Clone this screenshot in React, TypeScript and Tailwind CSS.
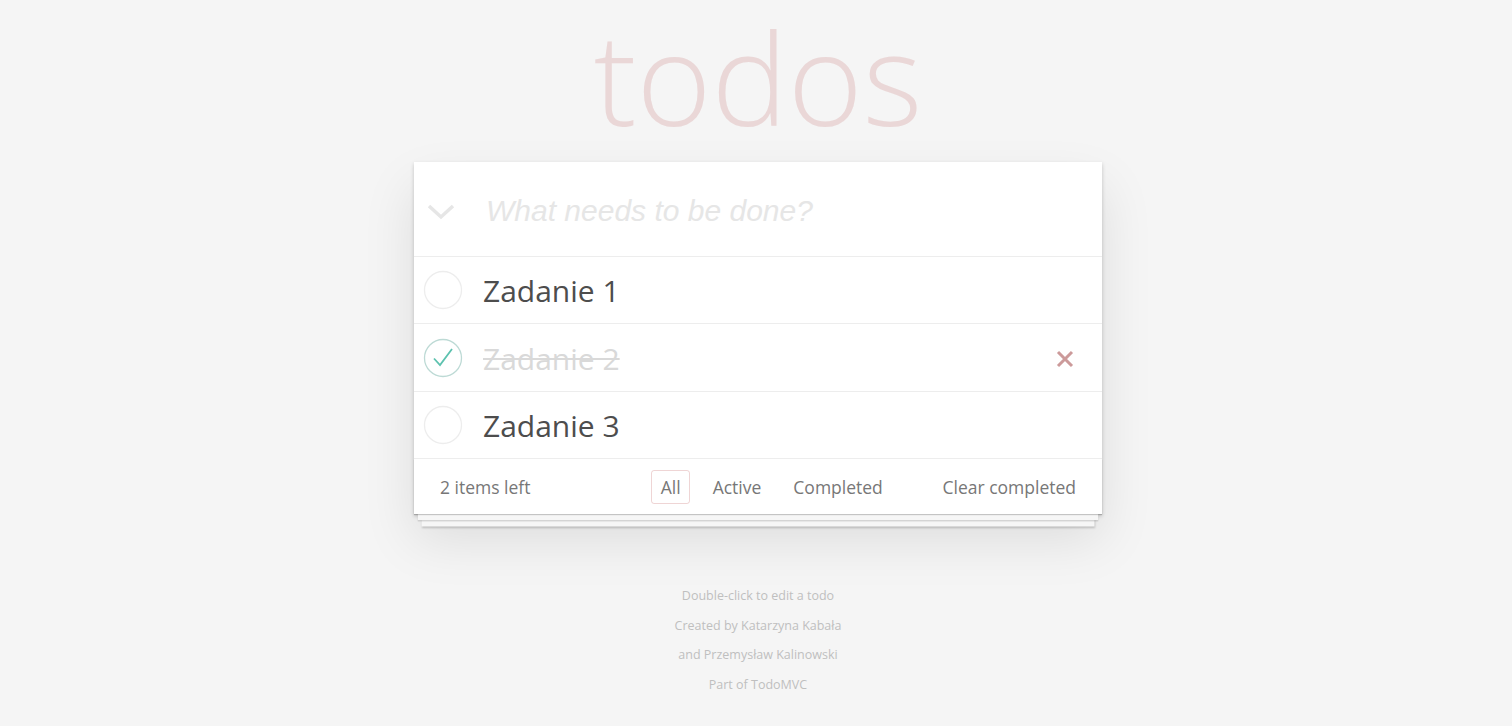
import React from "react";

function Circle({ done }: { done?: boolean }) {
  return (
    <svg width="40" height="40" viewBox="0 0 40 40" className="shrink-0">
      <circle cx="20" cy="20" r="18.5" fill="none" stroke={done ? "#bddad5" : "#ededed"} strokeWidth="1.3" />
      {done && <path d="M11 20.5 L17 27 L29 11" fill="none" stroke="#5dc2af" strokeWidth="1.8" />}
    </svg>
  );
}

function Item({ text, done }: { text: string; done?: boolean }) {
  return (
    <li className="flex h-[67.4px] items-center border-b border-[#ededed] pl-[9px] pr-[28px]">
      <Circle done={done} />
      <span
        className={
          "ml-[20px] mt-[2px] flex-1 text-[30px] leading-none " +
          (done ? "text-[#d9d9d9] line-through decoration-[2px]" : "text-[#4d4d4d]")
        }
      >
        {text}
      </span>
      {done && (
        <svg width="18" height="18" viewBox="0 0 18 18" className="mt-[3px]">
          <path d="M2 2 L16 16 M16 2 L2 16" stroke="#cc9a9a" strokeWidth="3" />
        </svg>
      )}
    </li>
  );
}

export default function App() {
  return (
    <div
      className="min-h-[726px] bg-[#f5f5f5] flex flex-col items-center pl-[4px]"
      style={{ fontFamily: '"Open Sans", "Liberation Sans", sans-serif' }}
    >
      <h1 className="h-[162px] pt-[2px] text-[128px] font-thin leading-[150px] text-[#ead7d7] tracking-normal">
        todos
      </h1>
      <section className="w-[688px] bg-white shadow-[0_2px_4px_rgba(0,0,0,0.2),0_25px_50px_rgba(0,0,0,0.1)]">
        <div className="flex h-[95px] items-center border-b border-[#ededed]">
          <svg width="40" height="24" viewBox="0 0 40 24" className="ml-[7px] mt-[7px]">
            <path d="M8 5 L20 16 L32 5" fill="none" stroke="#e6e6e6" strokeWidth="3.5" />
          </svg>
          <span
            className="ml-[25px] mt-[3px] text-[30px] italic text-[#e6e6e6]"
            style={{ fontFamily: '"Liberation Sans", Arial, sans-serif' }}
          >
            What needs to be done?
          </span>
        </div>
        <ul>
          <Item text="Zadanie 1" />
          <Item text="Zadanie 2" done />
          <Item text="Zadanie 3" />
        </ul>
        <footer className="relative flex h-[55px] items-center px-[26px] text-[17.5px] text-[#777] shadow-[0_1px_1px_rgba(0,0,0,0.2),0_10px_0_-3.75px_#f6f6f6,0_11px_1px_-3.75px_rgba(0,0,0,0.2),0_20px_0_-7.5px_#f6f6f6,0_21px_2px_-7.5px_rgba(0,0,0,0.2)]">
          <span className="w-[211px]">2 items left</span>
          <div className="flex items-center gap-[12.5px]">
            <span className="rounded-[3px] border border-[rgba(175,47,47,0.2)] px-[8.75px] py-[3px]">All</span>
            <span className="border border-transparent px-[8.75px] py-[3px]">Active</span>
            <span className="border border-transparent px-[8.75px] py-[3px]">Completed</span>
          </div>
          <span className="ml-auto">Clear completed</span>
        </footer>
      </section>
      <footer className="mt-[67px] text-center text-[12.5px] leading-[29.5px] text-[#bfbfbf]">
        <p>Double-click to edit a todo</p>
        <p>Created by Katarzyna Kabała</p>
        <p>and Przemysław Kalinowski</p>
        <p>Part of TodoMVC</p>
      </footer>
    </div>
  );
}
